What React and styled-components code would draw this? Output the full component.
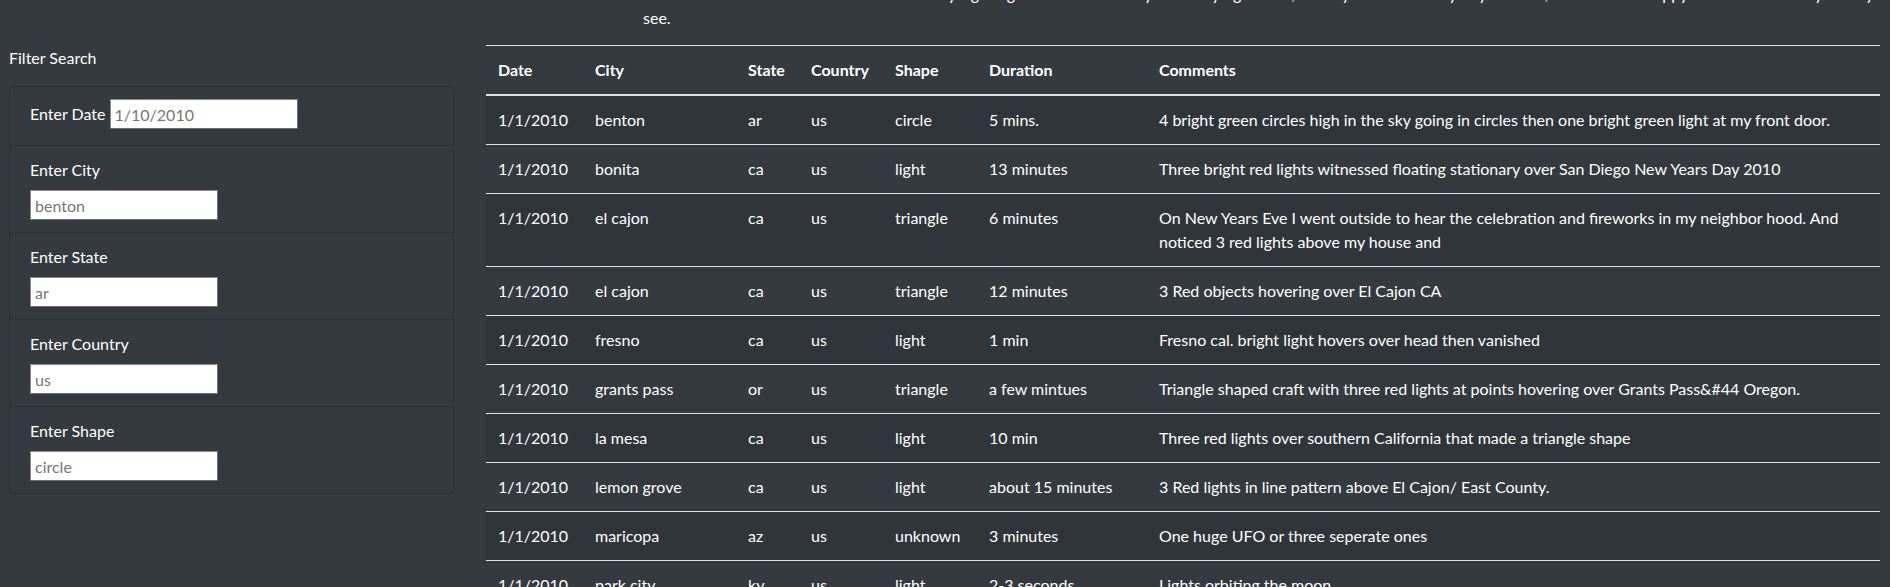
import React from 'react';
import styled, { createGlobalStyle } from 'styled-components';

const sightings = [
  ['1/1/2010', 'benton', 'ar', 'us', 'circle', '5 mins.', '4 bright green circles high in the sky going in circles then one bright green light at my front door.'],
  ['1/1/2010', 'bonita', 'ca', 'us', 'light', '13 minutes', 'Three bright red lights witnessed floating stationary over San Diego New Years Day 2010'],
  ['1/1/2010', 'el cajon', 'ca', 'us', 'triangle', '6 minutes', 'On New Years Eve I went outside to hear the celebration and fireworks in my neighbor hood. And noticed 3 red lights above my house and'],
  ['1/1/2010', 'el cajon', 'ca', 'us', 'triangle', '12 minutes', '3 Red objects hovering over El Cajon CA'],
  ['1/1/2010', 'fresno', 'ca', 'us', 'light', '1 min', 'Fresno cal. bright light hovers over head then vanished'],
  ['1/1/2010', 'grants pass', 'or', 'us', 'triangle', 'a few mintues', 'Triangle shaped craft with three red lights at points hovering over Grants Pass&#44 Oregon.'],
  ['1/1/2010', 'la mesa', 'ca', 'us', 'light', '10 min', 'Three red lights over southern California that made a triangle shape'],
  ['1/1/2010', 'lemon grove', 'ca', 'us', 'light', 'about 15 minutes', '3 Red lights in line pattern above El Cajon/ East County.'],
  ['1/1/2010', 'maricopa', 'az', 'us', 'unknown', '3 minutes', 'One huge UFO or three seperate ones'],
  ['1/1/2010', 'park city', 'ky', 'us', 'light', '2-3 seconds', 'Lights orbiting the moon'],
];

const columns = [
  { title: 'Date', width: 97 },
  { title: 'City', width: 153 },
  { title: 'State', width: 63 },
  { title: 'Country', width: 84 },
  { title: 'Shape', width: 94 },
  { title: 'Duration', width: 170 },
  { title: 'Comments' },
];

const filters = [
  { label: 'Enter Date', placeholder: '1/10/2010', inline: true },
  { label: 'Enter City', placeholder: 'benton' },
  { label: 'Enter State', placeholder: 'ar' },
  { label: 'Enter Country', placeholder: 'us' },
  { label: 'Enter Shape', placeholder: 'circle' },
];

const GlobalStyle = createGlobalStyle`
  html, body {
    margin: 0;
    background: #343a40;
    color: #fff;
    font-family: Lato, "Open Sans", sans-serif;
    font-size: 16px;
    line-height: 1.5;
    overflow: hidden;
  }
`;

const Page = styled.div`
  padding: 0 10px 0 9px;
`;

const Intro = styled.p`
  margin: -18px 0 15px;
  padding-left: 634px;
  white-space: nowrap;
  overflow: hidden;
`;

const Main = styled.div`
  display: grid;
  grid-template-columns: 445px 1fr;
  column-gap: 32px;
  align-items: start;
`;

const Sidebar = styled.aside`
  display: flex;
  flex-direction: column;
`;

const SideTitle = styled.div`
  padding-top: 1px;
  margin-bottom: 16px;
`;

const FilterList = styled.ul`
  list-style: none;
  margin: 0;
  padding: 0;
  border: 1px solid rgba(0, 0, 0, 0.14);
  border-radius: 4px;
`;

const FilterItem = styled.li`
  padding: 12px 20px;
  display: flex;
  flex-direction: ${(p) => (p.$inline ? 'row' : 'column')};
  align-items: flex-start;
  gap: ${(p) => (p.$inline ? '4px' : '8px')};
  min-height: ${(p) => (p.$inline ? '34px' : 'auto')};
  & + & {
    border-top: 1px solid rgba(0, 0, 0, 0.14);
  }
`;

const Label = styled.label`
  line-height: ${(p) => (p.$inline ? '30px' : '24px')};
`;

const Input = styled.input`
  box-sizing: border-box;
  width: 188px;
  height: 30px;
  padding: 1px 4px;
  border: 1px solid #8a8a8a;
  border-right-color: #6f6f6f;
  border-bottom-color: #6f6f6f;
  background: #fff;
  font-family: inherit;
  font-size: 16px;
  color: #333;
  outline: none;
  &::placeholder {
    color: #767676;
  }
`;

const Table = styled.table`
  width: 100%;
  border-collapse: collapse;
  table-layout: fixed;
  border-top: 1px solid #dee2e6;
`;

const Th = styled.th`
  text-align: left;
  font-weight: 700;
  padding: 12px;
  border-bottom: 2px solid #dee2e6;
  vertical-align: bottom;
`;

const Row = styled.tr`
  background: ${(p) => (p.$odd ? '#30353b' : 'transparent')};
`;

const Td = styled.td`
  padding: 12px;
  vertical-align: top;
  border-bottom: 1px solid #dee2e6;
`;

export default function App() {
  return (
    <Page>
      <GlobalStyle />
      <Intro>
        Use the filters to search the database for any sightings that match what you are trying to find, and if you have a story of your own, we would be happy to hear whatever you may
        <br />
        see.
      </Intro>
      <Main>
        <Sidebar>
          <SideTitle>Filter Search</SideTitle>
          <FilterList>
            {filters.map((f) => (
              <FilterItem key={f.label} $inline={f.inline}>
                <Label $inline={f.inline}>{f.label}</Label>
                <Input type="text" placeholder={f.placeholder} />
              </FilterItem>
            ))}
          </FilterList>
        </Sidebar>
        <Table>
          <colgroup>
            {columns.map((c) => (
              <col key={c.title} style={c.width ? { width: c.width } : undefined} />
            ))}
          </colgroup>
          <thead>
            <tr>
              {columns.map((c) => (
                <Th key={c.title}>{c.title}</Th>
              ))}
            </tr>
          </thead>
          <tbody>
            {sightings.map((s, i) => (
              <Row key={i} $odd={i % 2 === 0}>
                {s.map((cell, j) => (
                  <Td key={j}>{cell}</Td>
                ))}
              </Row>
            ))}
          </tbody>
        </Table>
      </Main>
    </Page>
  );
}
